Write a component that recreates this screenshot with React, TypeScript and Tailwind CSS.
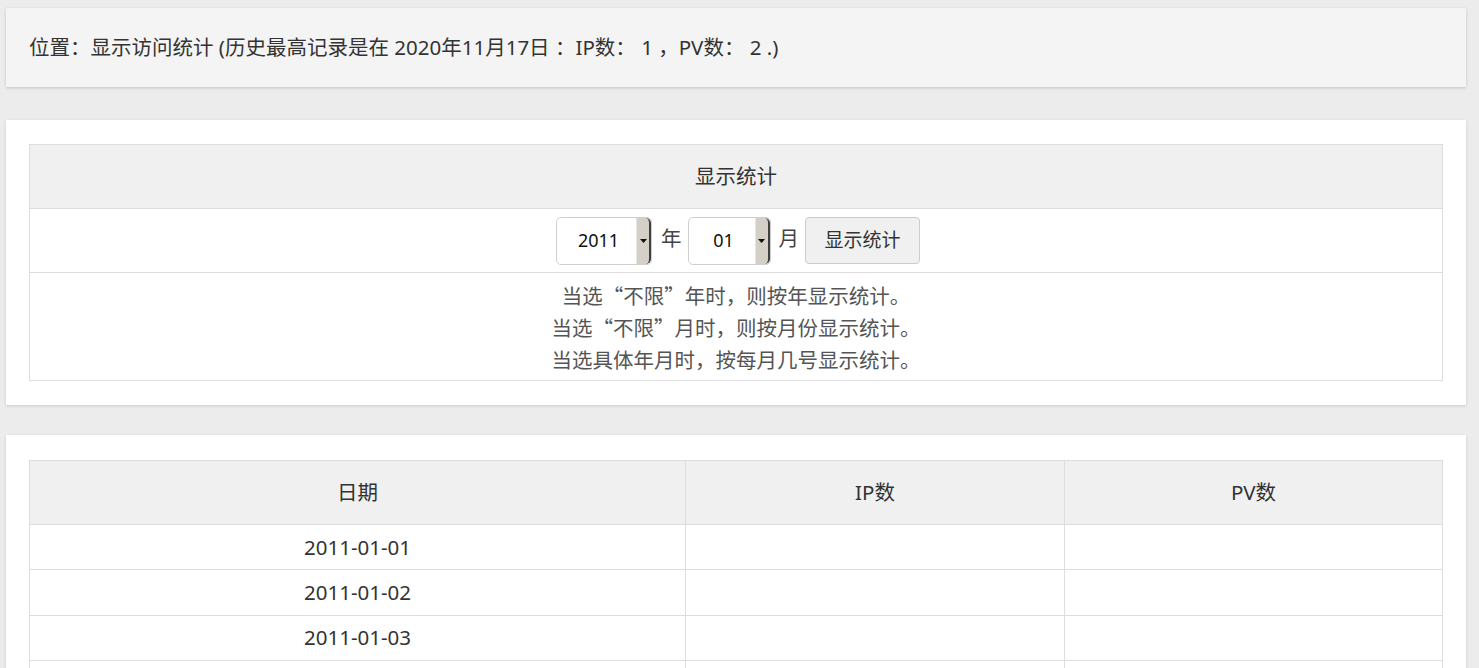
import React from "react";

const font = { fontFamily: '"Noto Sans", "Noto Sans CJK SC", sans-serif' };
const cjk = { fontFamily: '"Noto Sans CJK SC", "Noto Sans", sans-serif' };

function FakeSelect({ value, width }: { value: string; width: string }) {
  return (
    <div className={`inline-flex h-[48px] ${width} items-stretch rounded-[5px] border border-[#cfcfcf] bg-white overflow-hidden align-middle`}>
      <div className="flex flex-1 items-center justify-center text-[18px] text-[#111] pl-[4px]">{value}</div>
      <div className="flex w-[15px] items-center justify-center bg-[#d4d0c8] border-l border-[#e8e6e0] border-r-[2px] border-r-[#404040] rounded-r-[5px]">
        <svg width="7" height="4" viewBox="0 0 7 4"><path d="M0 0h7L3.5 4z" fill="#111" /></svg>
      </div>
    </div>
  );
}

export default function App() {
  const rows = ["2011-01-01", "2011-01-02", "2011-01-03", "2011-01-04"];
  return (
    <div className="min-h-[668px] bg-[#ececec] pt-[8px] pb-[20px] text-[#333]" style={font}>
      <div className="ml-[6px] mr-[13px] flex h-[79px] items-center bg-[#f4f4f4] pl-[23px] text-[20.5px] shadow-[0_1px_3px_rgba(0,0,0,0.18)]">
        位置：显示访问统计 (历史最高记录是在 2020年11月17日 ：IP数： 1 ，PV数： 2 .)
      </div>

      <div className="ml-[6px] mr-[13px] mt-[33px] bg-white px-[23px] pt-[24px] pb-[24px] shadow-[0_1px_3px_rgba(0,0,0,0.15)]">
        <table className="w-full border-collapse border border-[#dddddd] text-[20.5px]">
          <tbody>
            <tr className="h-[64px] bg-[#f0f0f0]">
              <td className="border border-[#dddddd] text-center">显示统计</td>
            </tr>
            <tr className="h-[64px]">
              <td className="border border-[#dddddd] text-center">
                <div className="flex items-center justify-center pl-[4px]">
                  <FakeSelect value="2011" width="w-[96px]" />
                  <span className="ml-[9px] mr-[6px] -mt-[4px] text-[#444]">年</span>
                  <FakeSelect value="01" width="w-[83px]" />
                  <span className="ml-[8px] mr-[6px] -mt-[4px] text-[#444]">月</span>
                  <button className="h-[47px] w-[115px] rounded-[4px] border border-[#cccccc] bg-[#f0f0f0] text-[19px] text-[#333]">
                    显示统计
                  </button>
                </div>
              </td>
            </tr>
            <tr className="h-[108px]">
              <td className="border border-[#dddddd] py-[5px] text-center leading-[32px] text-[#555]" style={cjk}>
                <div>当选“不限”年时，则按年显示统计。</div>
                <div>当选“不限”月时，则按月份显示统计。</div>
                <div>当选具体年月时，按每月几号显示统计。</div>
              </td>
            </tr>
          </tbody>
        </table>
      </div>

      <div className="ml-[6px] mr-[13px] mt-[30px] bg-white px-[23px] pt-[25px] pb-[25px] shadow-[0_1px_3px_rgba(0,0,0,0.15)]">
        <table className="w-full table-fixed border-collapse border border-[#dddddd] text-[20.5px]">
          <colgroup>
            <col className="w-[656px]" />
            <col className="w-[379px]" />
            <col />
          </colgroup>
          <thead>
            <tr className="h-[64px] bg-[#f0f0f0]">
              <th className="border border-[#dddddd] font-normal">日期</th>
              <th className="border border-[#dddddd] font-normal">IP数</th>
              <th className="border border-[#dddddd] font-normal">PV数</th>
            </tr>
          </thead>
          <tbody>
            {rows.map((d) => (
              <tr key={d} className="h-[45.3px]">
                <td className="border border-[#dddddd] text-center">{d}</td>
                <td className="border border-[#dddddd]"></td>
                <td className="border border-[#dddddd]"></td>
              </tr>
            ))}
          </tbody>
        </table>
      </div>
    </div>
  );
}
